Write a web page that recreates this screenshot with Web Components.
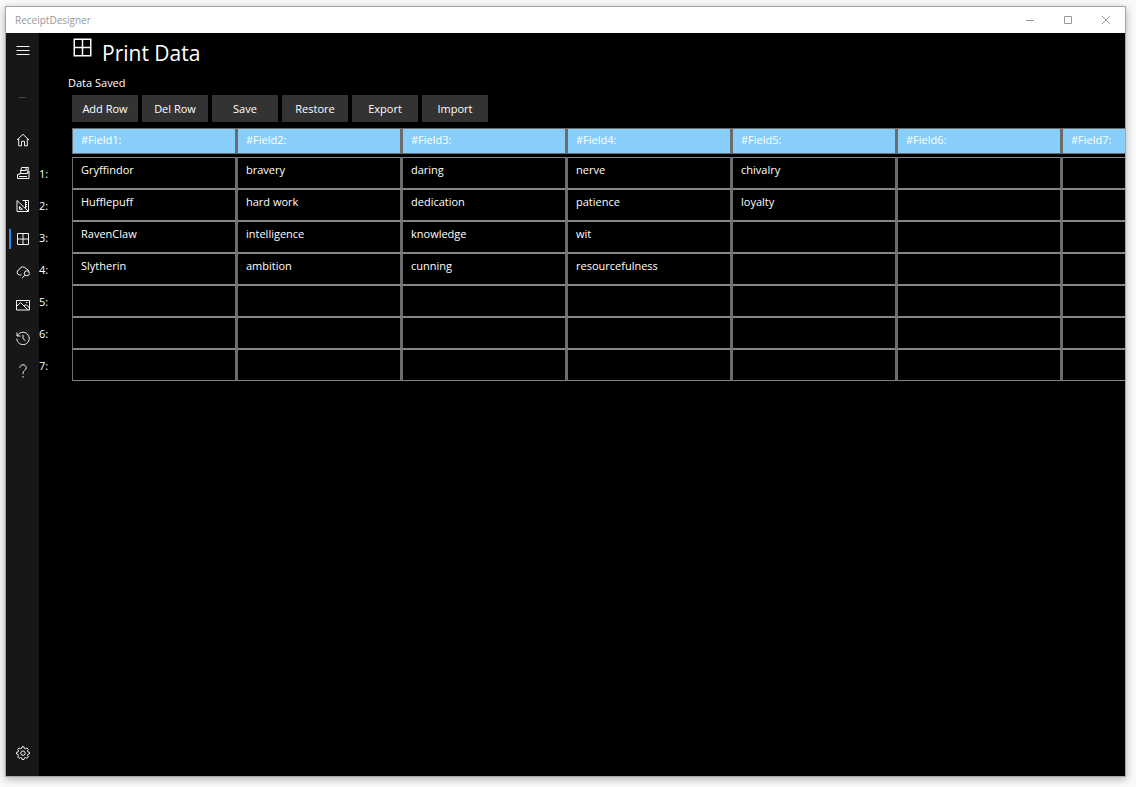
<!DOCTYPE html>
<html lang="en">
<head>
<meta charset="utf-8">
<title>ReceiptDesigner</title>
<style>
  html {
    height: 100%;
  }

  body {
    --text-color: #ffffff;
    --rail-color: #171717;
    --button-color: #333333;
    --field-color: #87cefa;
    --line-color: #6c6c6c;
    --row-line-color: #858585;
    --accent-color: #2f86e8;
    box-sizing: border-box;
    height: 100%;
    margin: 0;
    padding: 6px 10px 10px 5px;
    overflow: hidden;
    background-color: #fafafa;
    color: var(--text-color);
    font-family: "Open Sans", "Noto Sans", sans-serif;
    font-size: 11px;
    line-height: 16px;
  }
</style>
</head>
<body>
<app-window title="ReceiptDesigner">
  <nav-rail slot="rail" active="data"></nav-rail>
  <print-data>
    <tool-button>Add Row</tool-button>
    <tool-button>Del Row</tool-button>
    <tool-button>Save</tool-button>
    <tool-button>Restore</tool-button>
    <tool-button>Export</tool-button>
    <tool-button>Import</tool-button>
    <data-grid slot="grid" fields="7" rows="7"></data-grid>
  </print-data>
</app-window>

<script>
const ICONS = {
  menu: `<path d="M.5 3.500h13M.5 7.500h13M.5 11.500h13"/>`,
  home: `<path d="M1 7 7 1.300 13 7M2.700 5.800v7h2.800V8.300h3v4.500h2.800v-7"/>`,
  print: `<path d="M1.500 8.500h2v-1h8l1.500-2.500v7.500H1.500zM4.500 7.500l1-6h7l-1 6M4 4.500h6M10 1.500v2.500h2M3 10.500h8"/>`,
  design: `<path d="M1 1.500v11h11.500zM3.500 7.500v2.800h3zM6.500 1.500h6v11M9.500 1.500v7.500M9.500 3.500h1.500M9.500 5.500h1.500M9.500 7.500h1.500"/>`,
  data: `<path d="M1.500 1.500h11v11h-11zM7 1.500v11M1.500 7h11"/>`,
  cloud: `<path d="M5.500 10H3.500a2.700 2.700 0 0 1-.3-5.300A3.800 3.800 0 0 1 10.300 4 2.800 2.800 0 0 1 12.800 6.300"/><circle cx="10.800" cy="8.300" r="2.500"/><path d="m9 10.200-3 3"/>`,
  image: `<path d="M.5 2.500h13v9.500H.500zM.500 8.500l4-4 7.500 7.500M8 8l2-1.500 3.500 3.500"/><path d="M10 4.500h1.500"/>`,
  history: `<path d="M1 1.500v3.500h3.500M1.300 5A6.200 6.200 0 1 1 .8 7.600M7 3.800v3.700l2.500 2.300"/>`,
  help: `<path d="M3.800 3.800C4 1.900 5.300.8 7 .8s3.200 1.200 3.200 2.900C10.200 6.300 7 6.500 7 9.200v1M7 12v1.500"/>`,
  settings: `<path d="M6 .8h2l.4 1.600 1.100.4 1.400-.8 1.400 1.400-.8 1.400.4 1.100 1.500.4v1.700l-1.500.4-.4 1.100.8 1.400-1.400 1.400-1.400-.8-1.100.4L8 13.500H6l-.4-1.600-1.100-.4-1.400.8-1.400-1.400.8-1.400-.4-1.100L.6 8V6.300l1.500-.4.4-1.100-.8-1.400L3.100 2l1.400.8 1.100-.4z"/><circle cx="7" cy="7.150" r="2.200"/>`,
  minimize: `<path d="M3 7.500h8"/>`,
  maximize: `<path d="M3.500 3.500h7v7h-7z"/>`,
  close: `<path d="m3 3 8 8M11 3l-8 8"/>`
};

const icon = (name, size = 14) => /* html */ `
  <svg width="${size}" height="${size}" viewBox="0 0 14 14" fill="none" stroke="currentColor" aria-hidden="true">${ICONS[name]}</svg>`;

const DATA = [
  ["Gryffindor", "bravery", "daring", "nerve", "chivalry"],
  ["Hufflepuff", "hard work", "dedication", "patience", "loyalty"],
  ["RavenClaw", "intelligence", "knowledge", "wit"],
  ["Slytherin", "ambition", "cunning", "resourcefulness"]
];

class AppWindow extends HTMLElement {
  constructor() {
    super();
    this.attachShadow({ mode: "open" });
  }

  static get styles() {
    return /* css */`
      :host {
        display: flex;
        flex-direction: column;
        box-sizing: border-box;
        height: 100%;
        border: 1px solid #a5a5a5;
        box-shadow: 0 2px 8px rgba(0, 0, 0, 0.3);
        background-color: #000;
        overflow: hidden;
      }

      header {
        display: flex;
        align-items: center;
        justify-content: space-between;
        height: 26px;
        flex: none;
        padding-left: 9px;
        background-color: #fff;
        color: #999;
        font-size: 10px;
      }

      .controls {
        display: flex;
      }

      button {
        display: grid;
        place-items: center;
        width: 38px;
        height: 26px;
        padding: 0;
        border: none;
        background-color: transparent;
        color: inherit;
      }

      .body {
        display: flex;
        flex: 1;
        min-height: 0;
      }

      main {
        flex: 1;
        min-width: 0;
        overflow: hidden;
      }
    `;
  }

  connectedCallback() {
    const title = this.getAttribute("title") || "";
    this.shadowRoot.innerHTML = /* html */`
    <style>${AppWindow.styles}</style>
    <header>
      <span>${title}</span>
      <div class="controls">
        <button aria-label="Minimize">${icon("minimize")}</button>
        <button aria-label="Maximize">${icon("maximize")}</button>
        <button aria-label="Close">${icon("close")}</button>
      </div>
    </header>
    <div class="body">
      <slot name="rail"></slot>
      <main><slot></slot></main>
    </div>`;
  }
}

class NavRail extends HTMLElement {
  constructor() {
    super();
    this.attachShadow({ mode: "open" });
    this.items = ["home", "print", "design", "data", "cloud", "image", "history", "help"];
  }

  static get styles() {
    return /* css */`
      :host {
        display: flex;
        flex-direction: column;
        justify-content: space-between;
        flex: none;
        box-sizing: border-box;
        width: 33px;
        padding-bottom: 7px;
        background-color: var(--rail-color);
      }

      nav {
        display: flex;
        flex-direction: column;
      }

      button, a {
        display: grid;
        place-items: center;
        box-sizing: border-box;
        width: 33px;
        height: 33px;
        padding: 0;
        border: none;
        background-color: transparent;
        color: #f4f4f4;
      }

      hr {
        width: 7px;
        height: 1px;
        margin: 31px auto 25px;
        border: none;
        background-color: #444;
      }

      .active {
        background: linear-gradient(var(--accent-color), var(--accent-color)) 3px center / 2px 20px no-repeat;
      }
    `;
  }

  connectedCallback() {
    const active = this.getAttribute("active");
    this.shadowRoot.innerHTML = /* html */`
    <style>${NavRail.styles}</style>
    <nav>
      <button aria-label="Menu">${icon("menu")}</button>
      <hr>
      ${this.items.map(name => `<a href="#${name}" aria-label="${name}" class="${name === active ? "active" : ""}">${icon(name)}</a>`).join("")}
    </nav>
    <a href="#settings" aria-label="settings">${icon("settings")}</a>`;
  }
}

class ToolButton extends HTMLElement {
  constructor() {
    super();
    this.attachShadow({ mode: "open" });
  }

  connectedCallback() {
    this.shadowRoot.innerHTML = /* html */`
    <style>
      :host {
        display: block;
      }

      button {
        width: 66px;
        height: 27px;
        padding: 0;
        border: none;
        background-color: var(--button-color);
        color: inherit;
        font: inherit;
      }
    </style>
    <button><slot></slot></button>`;
  }
}

class PrintData extends HTMLElement {
  constructor() {
    super();
    this.attachShadow({ mode: "open" });
  }

  static get styles() {
    return /* css */`
      :host {
        display: block;
      }

      .heading {
        display: flex;
        gap: 9px;
        padding: 4px 0 0 33px;
      }

      h1 {
        margin: 0;
        font-size: 21px;
        font-weight: 400;
        line-height: 32px;
      }

      p {
        margin: 6px 0 4px 29px;
      }

      .toolbar {
        display: flex;
        gap: 4px;
        padding: 0 0 6px 33px;
      }
    `;
  }

  connectedCallback() {
    this.shadowRoot.innerHTML = /* html */`
    <style>${PrintData.styles}</style>
    <div class="heading">
      ${icon("data", 21)}
      <h1>Print Data</h1>
    </div>
    <p role="status">Data Saved</p>
    <div class="toolbar"><slot></slot></div>
    <slot name="grid"></slot>`;
  }
}

class DataGrid extends HTMLElement {
  constructor() {
    super();
    this.attachShadow({ mode: "open" });
  }

  static get styles() {
    return /* css */`
      :host {
        display: block;
      }

      table {
        width: max-content;
        table-layout: fixed;
        border-spacing: 0;
      }

      th, td {
        padding: 0;
        font-weight: 400;
        text-align: left;
      }

      .index {
        width: 33px;
      }

      tbody .index {
        height: 32px;
        padding-top: 2px;
        box-sizing: border-box;
      }

      .field {
        box-sizing: border-box;
        width: 165px;
        height: 26px;
        padding: 0 0 2px 8px;
        border: 1px solid var(--line-color);
        border-right-width: 2px;
        background-color: var(--field-color);
      }

      .gap td {
        height: 3px;
      }

      input {
        display: block;
        box-sizing: border-box;
        width: 165px;
        height: 32px;
        padding: 0 8px 8px;
        border: 1px solid;
        border-color: var(--row-line-color) var(--line-color);
        border-right-width: 2px;
        border-radius: 0;
        outline: none;
        background-color: transparent;
        color: inherit;
        font: inherit;
      }
    `;
  }

  getRow(row, fields) {
    let cells = "";
    for (let i = 0; i < fields; i++) {
      const value = (DATA[row] || [])[i] || "";
      cells += `<td><input type="text" value="${value}" aria-label="Row ${row + 1}, Field${i + 1}"></td>`;
    }
    return `<tr><th class="index" scope="row">${row + 1}:</th>${cells}</tr>`;
  }

  connectedCallback() {
    const fields = Number(this.getAttribute("fields"));
    const rows = Number(this.getAttribute("rows"));
    const heads = Array.from({ length: fields }, (_, i) => `<th class="field" scope="col">#Field${i + 1}:</th>`);
    const body = Array.from({ length: rows }, (_, i) => this.getRow(i, fields));
    this.shadowRoot.innerHTML = /* html */`
    <style>${DataGrid.styles}</style>
    <table>
      <thead>
        <tr><td class="index"></td>${heads.join("")}</tr>
        <tr class="gap"><td></td></tr>
      </thead>
      <tbody>${body.join("")}</tbody>
    </table>`;
  }
}

customElements.define("app-window", AppWindow);
customElements.define("nav-rail", NavRail);
customElements.define("tool-button", ToolButton);
customElements.define("print-data", PrintData);
customElements.define("data-grid", DataGrid);
</script>
</body>
</html>
